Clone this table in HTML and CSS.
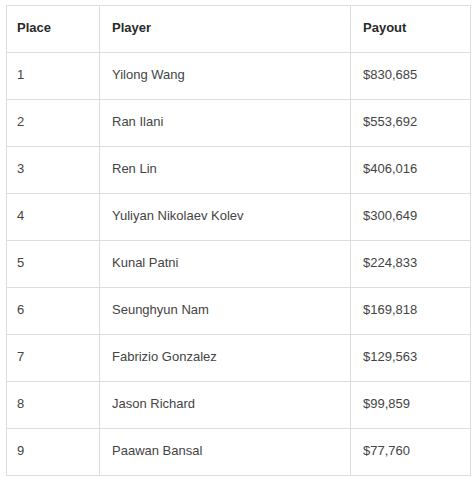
FILE: index.html
```html
<!DOCTYPE html>
<html>
<head>
<meta charset="utf-8">
<link rel="stylesheet" href="styles.css">
</head>
<body>
<div class="wrap">
<table class="payouts">
<thead>
<tr><th class="c-place">Place</th><th class="c-player">Player</th><th class="c-pay">Payout</th></tr>
</thead>
<tbody>
<tr><td>1</td><td>Yilong Wang</td><td>$830,685</td></tr>
<tr><td>2</td><td>Ran Ilani</td><td>$553,692</td></tr>
<tr><td>3</td><td>Ren Lin</td><td>$406,016</td></tr>
<tr><td>4</td><td>Yuliyan Nikolaev Kolev</td><td>$300,649</td></tr>
<tr><td>5</td><td>Kunal Patni</td><td>$224,833</td></tr>
<tr><td>6</td><td>Seunghyun Nam</td><td>$169,818</td></tr>
<tr><td>7</td><td>Fabrizio Gonzalez</td><td>$129,563</td></tr>
<tr><td>8</td><td>Jason Richard</td><td>$99,859</td></tr>
<tr><td>9</td><td>Paawan Bansal</td><td>$77,760</td></tr>
</tbody>
</table>
</div>
</body>
</html>
```
FILE: styles.css
```css
html, body {
  margin: 0;
  padding: 0;
  background: #ffffff;
}
.wrap {
  padding: 5px 0 0 6px;
}
.payouts {
  border-collapse: collapse;
  font-family: "Liberation Sans", Arial, sans-serif;
  font-size: 13px;
  color: #444444;
  table-layout: fixed;
  width: 464px;
}
.payouts th, .payouts td {
  border: 1px solid #dddddd;
  height: 47px;
  padding: 0 12px 4px;
  text-align: left;
  vertical-align: middle;
  box-sizing: border-box;
}
.payouts th:first-child, .payouts td:first-child {
  padding-left: 10px;
}
.payouts th {
  font-weight: bold;
  color: #2a2a2a;
}
.c-place { width: 93px; }
.c-player { width: 251px; }
.c-pay { width: 120px; }
```
